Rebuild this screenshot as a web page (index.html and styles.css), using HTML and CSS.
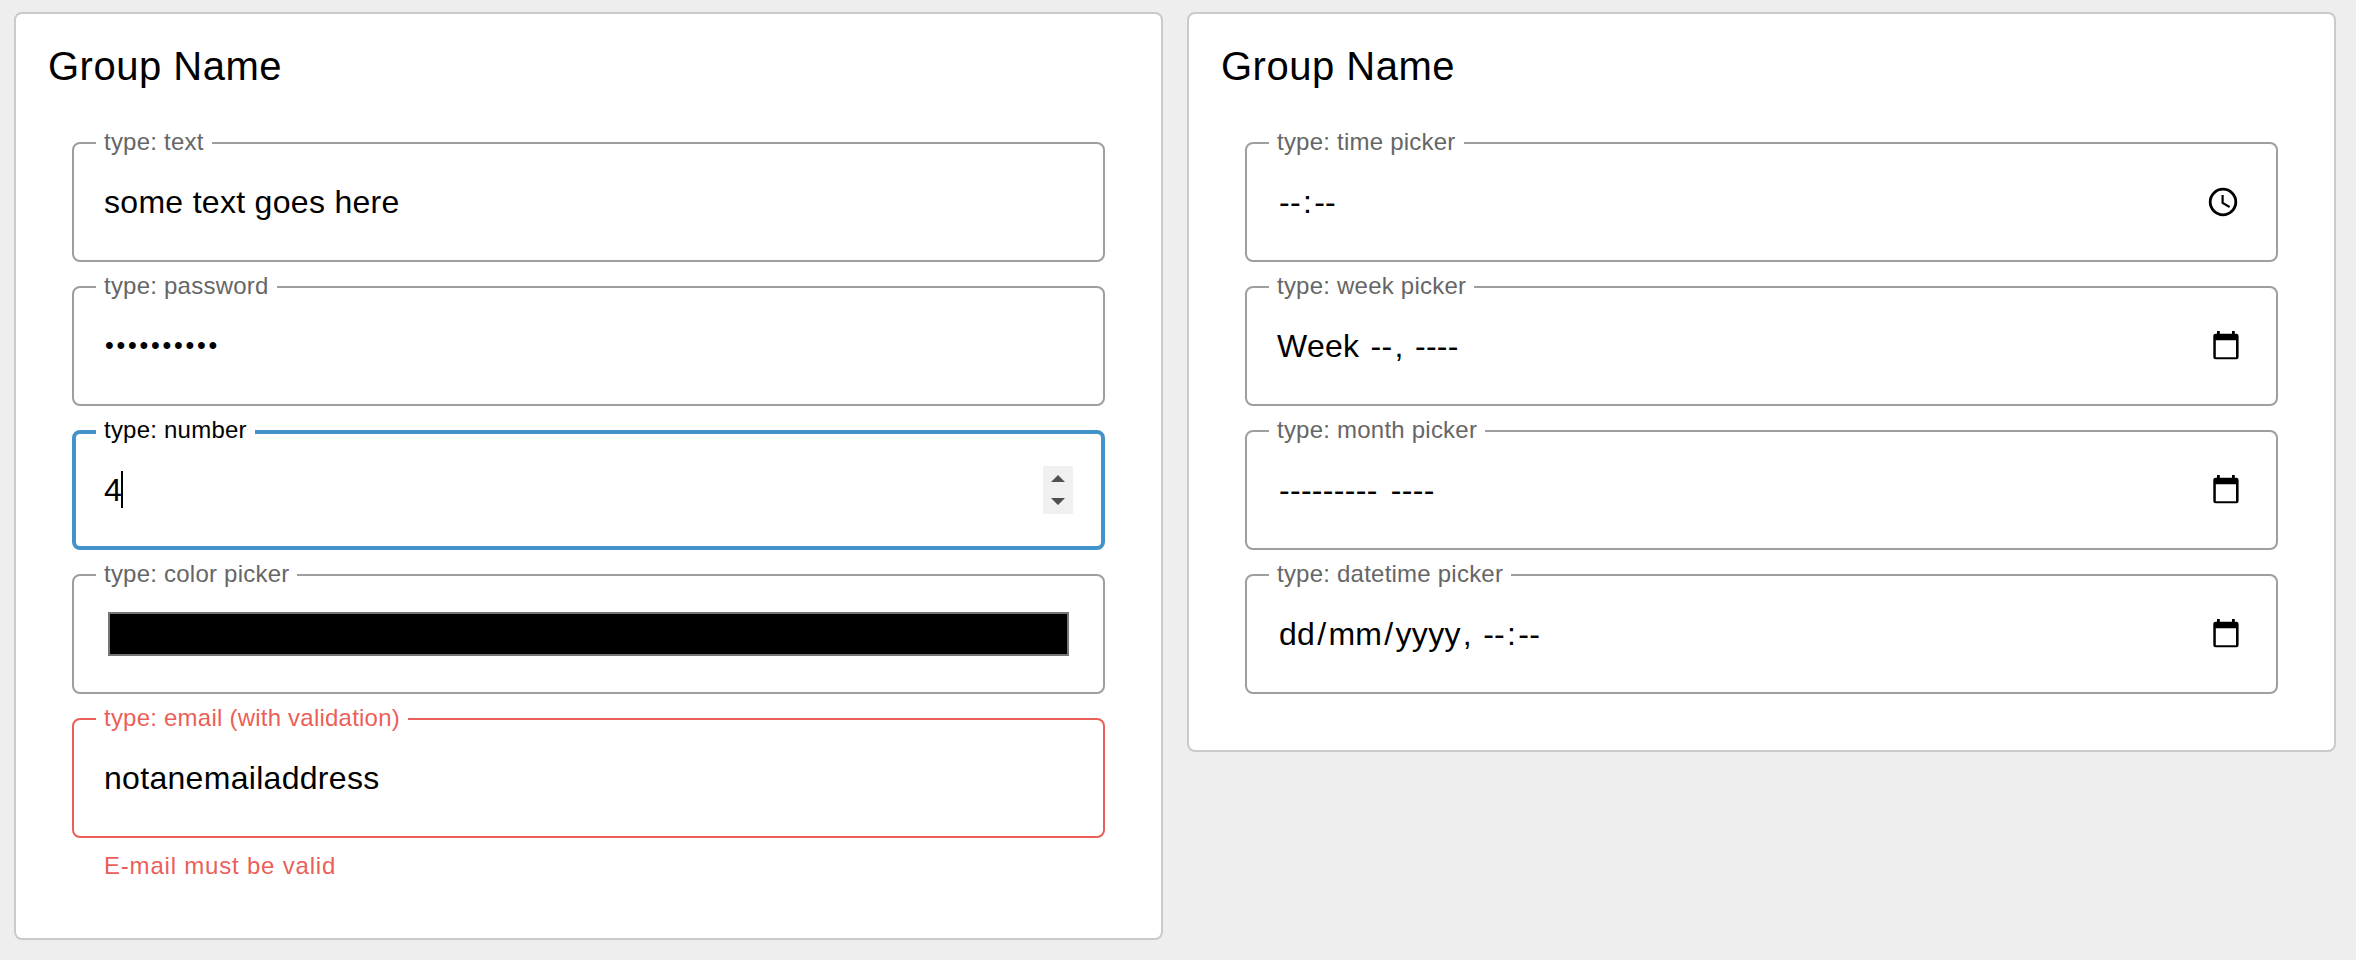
FILE: index.html
```html
<!DOCTYPE html>
<html lang="en">
<head>
<meta charset="utf-8">
<title>Form groups</title>
<link rel="stylesheet" href="styles.css">
</head>
<body>
<main class="groups">
  <section class="card">
    <h2 class="card-title">Group Name</h2>
    <div class="fields">
      <div class="field"><span class="label">type: text</span><span class="value">some text goes here</span></div>
      <div class="field"><span class="label">type: password</span><span class="value dots">••••••••••</span></div>
      <div class="field focused">
        <span class="label">type: number</span><span class="value">4</span><span class="caret"></span>
        <svg class="spinner" width="30" height="48" viewBox="0 0 30 48"><path d="M8 16L15 9L22 16ZM8 32H22L15 39Z" fill="#505050"/></svg>
      </div>
      <div class="field"><span class="label">type: color picker</span><span class="swatch"></span></div>
      <div class="field error"><span class="label">type: email (with validation)</span><span class="value">notanemailaddress</span></div>
    </div>
    <p class="helper">E-mail must be valid</p>
  </section>

  <section class="card">
    <h2 class="card-title">Group Name</h2>
    <div class="fields">
      <div class="field">
        <span class="label">type: time picker</span>
        <span class="value"><span class="part">--</span>:<span class="part">--</span></span>
        <svg class="icon clock" width="30" height="30" viewBox="0 0 30 30" fill="none" stroke="#000"><circle cx="15" cy="15" r="12.8" stroke-width="2.8"/><path d="M14.6 8V15.9L21.6 20" stroke-width="2.2"/></svg>
      </div>
      <div class="field">
        <span class="label">type: week picker</span>
        <span class="value">Week <span class="part">--</span>, <span class="part">----</span></span>
        <svg class="icon" width="26" height="30" viewBox="0 0 26 30"><path fill-rule="evenodd" d="M4 0H6.8V2.7H19V0H21.8V2.7H23.3Q25.6 2.7 25.6 5V26Q25.6 28.3 23.3 28.3H2.6Q.3 28.3 .3 26V5Q.3 2.7 2.6 2.7H4ZM2.8 9.2V26.2H23V9.2Z"/></svg>
      </div>
      <div class="field">
        <span class="label">type: month picker</span>
        <span class="value"><span class="part">---------</span> <span class="part">----</span></span>
        <svg class="icon" width="26" height="30" viewBox="0 0 26 30"><path fill-rule="evenodd" d="M4 0H6.8V2.7H19V0H21.8V2.7H23.3Q25.6 2.7 25.6 5V26Q25.6 28.3 23.3 28.3H2.6Q.3 28.3 .3 26V5Q.3 2.7 2.6 2.7H4ZM2.8 9.2V26.2H23V9.2Z"/></svg>
      </div>
      <div class="field">
        <span class="label">type: datetime picker</span>
        <span class="value"><span class="part">dd</span>/<span class="part">mm</span>/<span class="part">yyyy</span>, <span class="part">--</span>:<span class="part">--</span></span>
        <svg class="icon" width="26" height="30" viewBox="0 0 26 30"><path fill-rule="evenodd" d="M4 0H6.8V2.7H19V0H21.8V2.7H23.3Q25.6 2.7 25.6 5V26Q25.6 28.3 23.3 28.3H2.6Q.3 28.3 .3 26V5Q.3 2.7 2.6 2.7H4ZM2.8 9.2V26.2H23V9.2Z"/></svg>
      </div>
    </div>
  </section>
</main>
</body>
</html>
```
FILE: styles.css
```css
* { box-sizing: border-box; }
body {
  margin: 0;
  background: #eee;
  color: #000;
  font-family: "Liberation Sans", Arial, sans-serif;
}
.groups {
  display: flex;
  align-items: flex-start;
  gap: 24px;
  padding: 12px 20px 20px 14px;
}
.card {
  width: 1149px;
  padding: 28px 56px 56px;
  background: #fff;
  border: 2px solid #cacaca;
  border-radius: 8px;
}
.card-title {
  margin: 0 0 52px -24px;
  font-size: 40px;
  font-weight: 400;
  line-height: 48px;
  letter-spacing: .5px;
}
.fields {
  display: flex;
  flex-direction: column;
  gap: 24px;
}
.field {
  position: relative;
  display: flex;
  align-items: center;
  height: 120px;
  padding: 0 30px;
  border: 2px solid #9e9e9e;
  border-radius: 8px;
}
/* The label sits over the top border and hides the part behind it. */
.label {
  position: absolute;
  top: -14px;
  left: 22px;
  padding: 0 8px;
  background: #fff;
  color: #666;
  font-size: 24px;
  line-height: 24px;
  letter-spacing: .225px;
  white-space: pre;
}
.value {
  font-size: 32px;
  line-height: 38px;
  letter-spacing: .3px;
  white-space: pre;
}
.dots {
  padding: 0 0 2px 1px;
  font-size: 25px;
  letter-spacing: 2.75px;
}
.part { padding: 0 2px; }
.focused {
  padding: 0 28px;
  border: 4px solid #4293c9;
}
.focused .label {
  top: -16px;
  left: 20px;
  color: #000;
}
.caret {
  width: 2px;
  height: 37px;
  margin: 0 0 2px -1px;
  background: #000;
}
.spinner {
  margin-left: auto;
  background: #f0f0f0;
}
.swatch {
  flex: 1;
  height: 44px;
  margin: 0 4px;
  background: #000;
  border: 2px solid #767676;
}
.error { border-color: #eb5f59; }
.error .label { color: #eb5f59; }
.icon {
  margin-left: auto;
  margin-right: 7px;
}
.clock { margin-right: 8px; }
.helper {
  margin: 16px 0 4px 32px;
  color: #eb5f59;
  font-size: 24px;
  line-height: 24px;
  letter-spacing: .8px;
}
```
